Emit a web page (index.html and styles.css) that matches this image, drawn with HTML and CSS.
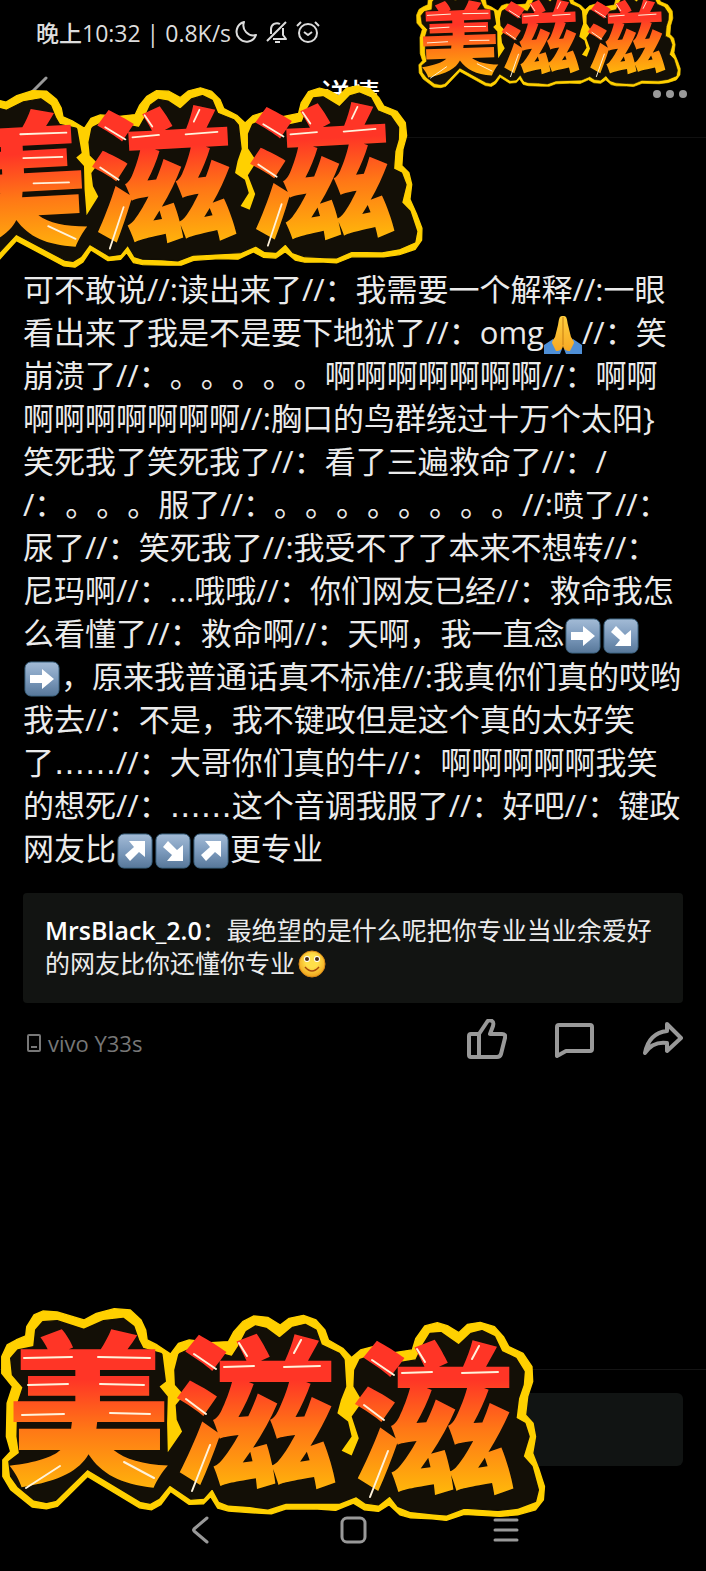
FILE: index.html
```
<!DOCTYPE html>
<html lang="zh-CN">
  <head>
    <meta charset="UTF-8" />
    <meta name="viewport" content="width=device-width, initial-scale=1.0" />
    <title>详情</title>
    <link rel="stylesheet" href="styles.css">
  </head>
  <body>
    <!-- shared artwork -->
    <svg class="defs" width="0" height="0" aria-hidden="true">
      <defs>
        <linearGradient id="fire" gradientUnits="userSpaceOnUse" x1="0" y1="40" x2="0" y2="205">
          <stop offset="0.3" stop-color="#ff3526" />
          <stop offset="0.6" stop-color="#ff7716" />
          <stop offset="1" stop-color="#ffb90a" />
        </linearGradient>
        <linearGradient id="tile" x1="0" y1="0" x2="0" y2="1">
          <stop offset="0" stop-color="#a3bbd6" />
          <stop offset="0.5" stop-color="#7d9bbd" />
          <stop offset="1" stop-color="#577799" />
        </linearGradient>
        <radialGradient id="face" cx="0.5" cy="0.4" r="0.6">
          <stop offset="0.4" stop-color="#ffe04a" />
          <stop offset="1" stop-color="#f0a21c" />
        </radialGradient>
        <linearGradient id="skin" x1="0" y1="0" x2="0" y2="1">
          <stop offset="0" stop-color="#ffcf3f" />
          <stop offset="1" stop-color="#f7a823" />
        </linearGradient>

        <g id="blob" transform="scale(0.357 0.333)" stroke-linejoin="round">
          <path fill="#ffd000" stroke="#ffd000" stroke-width="4" d="M5 200L20 165L45 150L72 138L75 110L95 75L120 63L160 66L235 90L270 70L320 56L365 60L395 90L408 120L412 150L440 165L478 192L500 160L530 150L590 158L640 155L655 125L680 95L710 78L750 82L785 105L810 85L850 76L885 90L910 120L920 150L960 175L985 203L1010 180L1045 170L1105 188L1155 180L1165 145L1190 108L1225 98L1255 108L1285 128L1310 103L1345 97L1385 110L1410 140L1425 170L1465 190L1490 230L1492 275L1478 320L1472 375L1493 400L1500 440L1492 490L1510 540L1525 590L1522 630L1500 660L1450 675L1400 680L1300 674L1250 692L1210 687L1150 684L1120 675L1090 645L1060 665L1020 660L990 640L940 662L880 657L800 658L760 672L720 670L640 664L610 655L590 620L570 642L530 644L478 605L450 645L425 660L390 654L245 560L160 650L130 657L90 652L30 600L8 560L8 510L30 485L18 440L20 340L35 290L5 250Z" />
          <path fill="#130f06" stroke="#130f06" stroke-width="4" d="M30 205L50 180L95 170L100 120L120 95L160 92L235 118L290 92L345 85L375 110L388 150L400 175L450 190L478 215L505 190L530 178L600 185L650 200L668 170L690 125L715 108L745 115L783 145L820 112L855 103L885 120L900 165L950 190L975 225L1005 210L1040 197L1110 220L1165 210L1185 165L1205 130L1235 128L1285 165L1320 130L1350 122L1385 140L1405 185L1445 205L1468 245L1465 285L1452 325L1445 385L1470 400L1482 440L1465 500L1490 530L1508 600L1500 635L1450 655L1395 662L1300 655L1250 675L1215 672L1150 665L1115 650L1092 618L1060 645L1025 640L998 620L950 640L900 640L800 640L750 657L700 650L640 645L615 635L595 595L570 625L535 628L475 585L445 625L420 640L395 635L245 538L155 632L130 638L95 630L50 590L30 560L25 515L55 490L48 440L50 340L65 292L35 255Z" />
          <path fill="#ffd000" d="M455 190L500 190L488 240L490 285L515 315L492 345L495 390L510 425L470 487L468 400L470 320L447 290L465 275ZM965 200L1008 205L992 240L990 290L1015 335L985 380L1005 445L985 497L957 483L985 440L975 395L945 370L955 330L970 290Z" />
        </g>
        <!-- white glints on the letters -->
        <g id="shine" fill="none" stroke="#fff3dc" stroke-width="2" stroke-linejoin="round" stroke-linecap="round">
          <path d="M24 68l48-1M98 67l52 1M28 95l40-1M100 94l44 1M22 125l42-1M110 123l40 1M26 198l34-22M124 172l30 16" />
          <path d="M194 64l22 15M186 109l20 15M192 201l18-46M224 77l30-1M284 77l36-1M239 53l8 13M301 50l-7 13" />
          <path d="M372 70l22 15M364 115l20 15M370 207l18-46M402 83l30-1M462 83l36-1M417 59l8 13M479 56l-7 13" />
        </g>

        <g id="arrow-right">
          <rect x="2" y="2" width="34" height="34" rx="6" fill="url(#tile)" stroke="#3f6684" />
          <path d="M7 15h12V9l12 10-12 10v-6H7z" fill="#fff" />
        </g>
        <g id="arrow-down">
          <rect x="2" y="2" width="34" height="34" rx="6" fill="url(#tile)" stroke="#3f6684" />
          <path d="M14 9l9 9 6-5v16H13l5-6-9-8z" fill="#fff" />
        </g>
        <g id="arrow-up">
          <rect x="2" y="2" width="34" height="34" rx="6" fill="url(#tile)" stroke="#3f6684" />
          <path d="M14 29l9-9 6 5V9H13l5 6-9 8z" fill="#fff" />
        </g>
      </defs>
    </svg>

    <header class="top">
      <div class="status">
        <span>晚上10:32 | 0.8K/s</span>
        <svg class="status-icon" viewBox="0 0 24 24"><path d="M10 2a10 10 0 1 0 12 13A10 10 0 0 1 10 2z" /></svg>
        <svg class="status-icon" viewBox="0 0 24 24"><path d="M2 21L21 2M6 14V9a6 6 0 0 1 9-5M18 8v7l3 4H8M10 22h5" /></svg>
        <svg class="status-icon" viewBox="0 0 24 24"><circle cx="12" cy="13" r="9" /><path d="M8 12l4 3 4-3M1 6l4-4M23 6l-4-4" /></svg>
      </div>
      <div class="title-bar">
        <button class="icon-button" aria-label="返回">
          <svg width="20" height="36" viewBox="0 0 20 36"><path d="M18 2L2 18l16 16" /></svg>
        </button>
        <h1>详情</h1>
        <button class="icon-button" aria-label="更多">
          <svg width="36" height="10" viewBox="0 0 36 10" class="dots"><circle cx="5" cy="5" r="4" /><circle cx="18" cy="5" r="4" /><circle cx="31" cy="5" r="4" /></svg>
        </button>
      </div>

      <svg class="sticker sticker-small" viewBox="0 0 560 240">
        <use href="#blob" />
        <text class="sticker-text" x="6 174 352" y="181 184 190">美滋滋</text>
        <use href="#shine" />
      </svg>
      <svg class="sticker sticker-medium" viewBox="0 0 560 240">
        <use href="#blob" />
        <text class="sticker-text" x="6 174 352" y="181 184 190">美滋滋</text>
        <use href="#shine" />
      </svg>
    </header>

    <main class="post">
      <p class="post-text">
        可不敢说//:读出来了//：我需要一个解释//:一眼<br>
        看出来了我是不是要下地狱了//：omg<svg class="emoji" viewBox="0 0 38 38"><path d="M0 29l9-6 9 10-2 5H0zM38 29l-9-6-9 10 2 5h16z" fill="#4f8fd6" /><path d="M18 0c-3 0-3 4-4 9L11 21c-2 3-3 4-3 6l4 8c4 0 7-2 7-6 0 4 3 6 7 6l4-8c0-2-1-3-3-6L24 9c-1-5-1-9-4-9z" fill="url(#skin)" /><path d="M19 1v28" stroke="#c77f14" /></svg>//：笑<br>
        崩溃了//：。。。。。啊啊啊啊啊啊啊//：啊啊<br>
        啊啊啊啊啊啊啊//:胸口的鸟群绕过十万个太阳}<br>
        笑死我了笑死我了//：看了三遍救命了//：/<br>
        /：。。。服了//：。。。。。。。。//:喷了//：<br>
        尿了//：笑死我了//:我受不了了本来不想转//：<br>
        尼玛啊//：...哦哦//：你们网友已经//：救命我怎<br>
        么看懂了//：救命啊//：天啊，我一直念<svg class="emoji" viewBox="0 0 38 38"><use href="#arrow-right" /></svg><svg class="emoji" viewBox="0 0 38 38"><use href="#arrow-down" /></svg><br>
        <svg class="emoji" viewBox="0 0 38 38"><use href="#arrow-right" /></svg>，原来我普通话真不标准//:我真你们真的哎哟<br>
        我去//：不是，我不键政但是这个真的太好笑<br>
        了<span class="ellipsis">……</span>//：大哥你们真的牛//：啊啊啊啊啊我笑<br>
        的想死//：<span class="ellipsis">……</span>这个音调我服了//：好吧//：键政<br>
        网友比<svg class="emoji" viewBox="0 0 38 38"><use href="#arrow-up" /></svg><svg class="emoji" viewBox="0 0 38 38"><use href="#arrow-down" /></svg><svg class="emoji" viewBox="0 0 38 38"><use href="#arrow-up" /></svg>更专业
      </p>

      <blockquote class="quote">
        <strong>MrsBlack_2.0</strong>：最绝望的是什么呢把你专业当业余爱好<br>
        的网友比你还懂你专业<svg class="smiley" viewBox="0 0 28 28"><circle cx="14" cy="14" r="13" fill="url(#face)" stroke="#d98a17" /><ellipse cx="9" cy="9" rx="3" ry="3" fill="#fff" /><ellipse cx="19" cy="9" rx="3" ry="3" fill="#fff" /><circle cx="9" cy="9" r="2" fill="#4b2c10" /><circle cx="19" cy="9" r="2" fill="#4b2c10" /><path d="M7 17q7 8 14 0" fill="none" stroke="#a8480c" stroke-width="1.5" /></svg>
      </blockquote>

      <div class="post-footer">
        <span class="device">
          <svg width="16" height="20" viewBox="0 0 16 20"><rect x="2" y="2" width="12" height="16" rx="1" /><path d="M5 14h6" /></svg>
          vivo Y33s
        </span>
        <div class="actions">
          <button class="icon-button" aria-label="赞">
            <svg width="40" height="40" viewBox="0 0 40 40"><path d="M2 17q0-2 2-2h8L20 3q2-3 5-1 2 1 1 5l-3 8h12q4 0 3 4l-4 16q-1 3-4 3H4q-2 0-2-2zM12 15v23" /></svg>
          </button>
          <button class="icon-button" aria-label="评论">
            <svg width="40" height="40" viewBox="0 0 40 40"><path d="M2 37V8q0-2 2-2h31q2 0 2 2v22q0 2-2 2H11z" /></svg>
          </button>
          <button class="icon-button" aria-label="转发">
            <svg width="40" height="40" viewBox="0 0 40 40"><path d="M2 34Q6 14 24 12V5l14 14-14 13v-8Q10 22 2 34z" /></svg>
          </button>
        </div>
      </div>
    </main>

    <footer class="bottom">
      <div class="comment-bar">
        <input class="comment-input" type="text" aria-label="写评论" />
      </div>
      <svg class="sticker sticker-large" viewBox="0 0 560 240">
        <use href="#blob" />
        <text class="sticker-text" x="6 174 352" y="181 184 190">美滋滋</text>
        <use href="#shine" />
      </svg>
      <nav class="system-nav">
        <button class="icon-button" aria-label="后退">
          <svg width="28" height="28" viewBox="0 0 28 28"><path d="M21 2L8 13q-1 1 0 2l13 11" /></svg>
        </button>
        <button class="icon-button" aria-label="主屏幕">
          <svg width="28" height="28" viewBox="0 0 28 28"><rect x="3" y="2" width="23" height="24" rx="5" /></svg>
        </button>
        <button class="icon-button" aria-label="菜单">
          <svg width="28" height="28" viewBox="0 0 28 28"><path d="M3 4h22M3 14h22M3 24h22" /></svg>
        </button>
      </nav>
    </footer>
  </body>
</html>
```
FILE: styles.css
```
* {
  box-sizing: border-box;
}
body {
  font-family: 'Open Sans', 'Noto Sans CJK SC', sans-serif;
  text-spacing-trim: space-all;
  background-color: #000;
  color: #ebebeb;
  margin: 0;
  display: flex;
  flex-direction: column;
  min-height: 100vh;
  overflow-x: hidden;
}
svg {
  flex: none;
}
.defs {
  position: absolute;
}
.icon-button {
  display: flex;
  align-items: center;
  justify-content: center;
  background: none;
  border: none;
  padding: 0;
  cursor: pointer;
}
.icon-button svg {
  fill: none;
  stroke: #999;
  stroke-width: 3;
  stroke-linejoin: round;
  stroke-linecap: round;
}
.actions .icon-button svg {
  stroke-width: 4;
}

/* status bar and title */
.top {
  position: relative;
  border-bottom: 1px solid #101010;
}
.status {
  display: flex;
  align-items: center;
  gap: 7px;
  height: 64px;
  padding: 0 36px;
  font-size: 23px;
  font-weight: 500;
  color: #ddd;
}
.status span {
  margin-right: -4px;
}
.status-icon {
  width: 24px;
  height: 24px;
  fill: none;
  stroke: #ddd;
  stroke-width: 2;
  stroke-linejoin: round;
}
.title-bar {
  display: flex;
  align-items: center;
  justify-content: space-between;
  height: 73px;
  padding: 0 18px 14px 28px;
}
.title-bar h1 {
  margin: 0;
  font-size: 30px;
  font-weight: 500;
  line-height: 40px;
  color: #fff;
}
.icon-button .dots {
  fill: #999;
  stroke: none;
}

/* stickers lie over the page */
.sticker {
  position: absolute;
  z-index: 1;
  overflow: visible;
  transform-origin: 32% 35%;
  pointer-events: none;
}
.sticker-small {
  top: -20px;
  left: 416px;
  width: 270px;
  transform: rotate(-2deg);
}
.sticker-medium {
  top: 71px;
  left: -66px;
  width: 497px;
  transform: rotate(-3deg);
}
.sticker-large {
  top: -79px;
  left: 0;
  width: 560px;
}
.sticker-text {
  font-family: 'Noto Sans CJK SC', sans-serif;
  font-size: 164px;
  font-weight: 900;
  fill: url(#fire);
}

/* post */
.post {
  flex: 1;
  padding: 130px 23px 0;
}
.post-text {
  margin: 0;
  font-size: 31px;
  line-height: 43px;
  white-space: nowrap;
}
.ellipsis {
  font-family: 'DejaVu Sans', sans-serif;
  line-height: 1;
}
.emoji {
  width: 38px;
  height: 38px;
  margin: -4px 0;
  vertical-align: -6px;
}
.quote {
  margin: 23px 0 0;
  padding: 21px 22px 23px;
  font-size: 25px;
  line-height: 33px;
  white-space: nowrap;
  background-color: #121412;
  border-radius: 4px;
}
.quote strong {
  font-weight: 600;
  color: #fff;
}
.smiley {
  width: 28px;
  height: 28px;
  margin-left: 3px;
  vertical-align: -5px;
}
.post-footer {
  display: flex;
  align-items: center;
  justify-content: space-between;
  margin-top: 16px;
}
.device {
  display: flex;
  align-items: center;
  gap: 6px;
  padding: 8px 3px 0;
  font-size: 22px;
  line-height: 28px;
  color: #777;
}
.device svg {
  fill: none;
  stroke: #777;
  stroke-width: 2;
}
.actions {
  display: flex;
  gap: 48px;
}

/* comment bar and system navigation */
.bottom {
  position: relative;
}
.comment-bar {
  padding: 23px;
  border-top: 1px solid #141414;
}
.comment-input {
  display: block;
  width: 100%;
  height: 73px;
  padding: 0 22px;
  font-size: 25px;
  color: #ebebeb;
  background-color: #111413;
  border: none;
  border-radius: 6px;
}
.system-nav {
  display: flex;
  justify-content: center;
  height: 82px;
}
.system-nav .icon-button {
  width: 153px;
}
```
